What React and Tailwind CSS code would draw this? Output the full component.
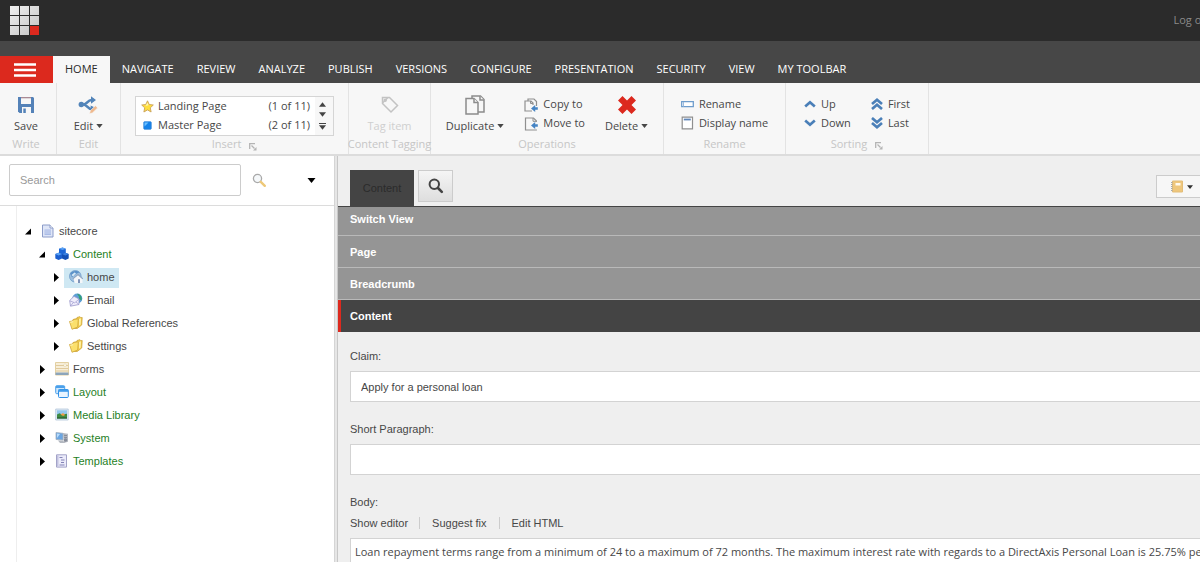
import React, { useState } from 'react';

/* ---------- icons ---------- */

const Caret = ({ className = '' }) => (
    <svg viewBox="0 0 8 5" className={`shrink-0 ${className}`} fill="currentColor" aria-hidden="true">
        <path d="M0 0h8L4 5z" />
    </svg>
);

const Logo = () => (
    <svg width="30" height="30" viewBox="0 0 30 30" aria-label="Sitecore">
        <defs>
            <linearGradient id="cell" x1="0" y1="0" x2="1" y2="1">
                <stop offset="0" stopColor="#f2f2f2" />
                <stop offset="1" stopColor="#c2c2c2" />
            </linearGradient>
        </defs>
        <path d="M0 0h9v9H0zM10 0h9v9h-9zM20 0h9v9h-9zM0 10h9v9H0zM10 10h9v9h-9zM20 10h9v9h-9zM0 20h9v9H0zM10 20h9v9h-9z" fill="url(#cell)" />
        <path d="M20 20h9v9h-9z" fill="#dc291e" />
    </svg>
);

const SaveIcon = () => (
    <svg width="18" height="18" viewBox="0 0 18 18" aria-hidden="true">
        <path d="M1 1h15l1 1v15H2.500L1 15.500z" fill="#5482b8" />
        <path d="M4 1h10v7H4zM5 11h9v6H5z" fill="#f7f7f7" />
        <path d="M4 1h10v1.300H4z" fill="#a98a94" />
        <path d="M6.300 12.500h2.500V17H6.300z" fill="#5482b8" />
    </svg>
);

const EditIcon = () => (
    <svg width="20" height="18" viewBox="0 0 20 18" fill="none" aria-hidden="true">
        <path d="M3 8.500h2.500c3.500 0 4-4.500 8-4.500h2M5.500 8.500c3.500 0 4 4.500 8 4.500h1" stroke="#5284b9" strokeWidth="2.600" />
        <path d="M13 .2L18 4l-5 3.800zM12.500 9.500l4.500 2-3.500 4z" fill="#5284b9" />
        <circle cx="3.300" cy="8.500" r="2.700" fill="#5284b9" />
        <path d="M11.500 17.800l.9-3.200 5.100-4.900 2.100 2.200-5 4.900z" fill="#efb98e" stroke="#f7f7f7" strokeWidth=".6" />
    </svg>
);

const StarIcon = () => (
    <svg width="13" height="13" viewBox="0 0 13 13" aria-hidden="true">
        <path d="M6.500 .8l1.700 3.700 4.100.5-3 2.800.8 4.200-3.600-2.100-3.600 2.100.8-4.200-3-2.800 4.100-.5z" fill="#ffdf3d" stroke="#caa05a" strokeWidth=".9" />
        <path d="M6.500 2.500l1 2.800-3 .6z" fill="#fff6b5" />
    </svg>
);

const SquareIcon = () => (
    <svg width="13" height="13" viewBox="0 0 13 13" aria-hidden="true">
        <rect x="2.800" y="2.800" width="7.400" height="7.400" rx=".6" fill="#1583ea" stroke="#2a7fd6" strokeWidth=".8" />
        <path d="M3.500 3.500h4l-4 4z" fill="#6cc0ff" />
    </svg>
);

const LauncherIcon = () => (
    <svg width="8" height="8" viewBox="0 0 8 8" fill="none" stroke="#b4b4b4" aria-hidden="true">
        <path d="M.7 6V.7H6M2.500 2.500l3 3" strokeWidth="1.300" />
        <path d="M7.500 4v3.500H4z" fill="#b4b4b4" stroke="none" />
    </svg>
);

const TagIcon = () => (
    <svg width="18" height="18" viewBox="0 0 18 18" fill="none" stroke="#c3c3c3" strokeWidth="1.500" aria-hidden="true">
        <path d="M1.500 1.500v6l8.500 8.500 6.500-6.500-8-8z" />
        <path d="M1.500 7L7 1.500" />
        <circle cx="4.200" cy="4.200" r="1" />
    </svg>
);

const DuplicateIcon = () => (
    <svg width="20" height="20" viewBox="0 0 20 20" fill="#f7f7f7" stroke="#8c8c8c" strokeWidth="1.500" aria-hidden="true">
        <path d="M7 1h8.500L19 4.500V17H7z" />
        <path d="M15 1v4h4" />
        <path d="M1 3.500h8L13 7.500V19H1z" />
        <path d="M9 3.500v4h4" />
    </svg>
);

const CopyIcon = () => (
    <svg width="14" height="14" viewBox="0 0 14 14" fill="none" stroke="#8f8f8f" aria-hidden="true">
        <path d="M4 3V1h6l2.500 2.500V8M1 3h6l2 2v2M1 2.500V13h7" strokeWidth="1.200" />
        <path d="M6.500 3v2.500H9" />
        <path d="M13.800 9.300h-2.600V7L7 10.500l4.200 3.400v-2.200h2.600z" fill="#4584c4" stroke="none" />
    </svg>
);

const MoveIcon = () => (
    <svg width="14" height="14" viewBox="0 0 14 14" fill="none" stroke="#8f8f8f" aria-hidden="true">
        <path d="M12.300 12.500v.5H1.500V1h8l2.800 2.800V5" strokeWidth="1.200" />
        <path d="M9 1v3.300h3.300" />
        <path d="M13.800 7.300h-2.600V5L7 8.500l4.200 3.400V9.700h2.600z" fill="#4584c4" stroke="none" />
    </svg>
);

const DeleteIcon = () => (
    <svg width="18" height="18" viewBox="0 0 18 18" aria-hidden="true">
        <path d="M4.500 0L9 4.500 13.500 0 18 4.500 13.500 9l4.500 4.500-4.500 4.500L9 13.500 4.500 18 0 13.500 4.500 9 0 4.500z" fill="#dc291e" />
    </svg>
);

const RenameIcon = () => (
    <svg width="13" height="12" viewBox="0 0 13 12" fill="none" aria-hidden="true">
        <path d="M.7 3.700h11.600v5H.7z" fill="#fff" stroke="#6f9dcc" strokeWidth="1.300" />
        <path d="M2.500 4v4.500" stroke="#9bbbe0" />
    </svg>
);

const DisplayNameIcon = () => (
    <svg width="13" height="14" viewBox="0 0 13 14" fill="none" aria-hidden="true">
        <path d="M1.200 1.200h10.300v11.600H1.200z" fill="#fff" stroke="#8f8f8f" strokeWidth="1.200" />
        <path d="M2.800 3.500h7" stroke="#5f86b8" strokeWidth="1.800" />
    </svg>
);

const Chevrons = ({ double, down }) => (
    <svg width="12" height="12" viewBox="0 0 12 12" fill="none" stroke="#4a7fb8" strokeWidth="2.700" className={down ? 'rotate-180' : ''} aria-hidden="true">
        {double ? <path d="M1 6L6 1.800 11 6M1 11L6 6.800l5 4.200" /> : <path d="M1.200 8.500L6 4.300l4.800 4.200" />}
    </svg>
);

const SearchGlass = () => (
    <svg width="15" height="15" viewBox="0 0 15 15" fill="none" aria-hidden="true">
        <circle cx="5.500" cy="5.500" r="4.100" fill="#f5f8fa" stroke="#a9a9a9" strokeWidth="1.300" />
        <path d="M8.800 8.800l4 4" stroke="#edc878" strokeWidth="2.400" strokeLinecap="round" />
    </svg>
);

const BoldSearch = () => (
    <svg width="16" height="16" viewBox="0 0 16 16" fill="none" stroke="#444" aria-hidden="true">
        <circle cx="6.300" cy="6.300" r="4.700" strokeWidth="2" />
        <path d="M10 10l3.800 3.800" strokeWidth="2.600" strokeLinecap="round" />
    </svg>
);

const NotebookIcon = () => (
    <svg width="12" height="13" viewBox="0 0 12 13" aria-hidden="true">
        <path d="M1.500 1h10v11h-10z" fill="#efc77c" stroke="#e3bd78" />
        <path d="M4.500 3h5v2.500h-5z" fill="#fffaf0" />
        <path d="M.8 2v9.500" stroke="#a8a8a8" strokeWidth="1.500" strokeDasharray="1 1" />
    </svg>
);

const DocumentIcon = () => (
    <svg width="14" height="14" viewBox="0 0 14 14" aria-hidden="true">
        <path d="M1.500 1h7.500l3 3v9H1.500z" fill="#dfe6f7" stroke="#8c9cc9" />
        <path d="M9 1v3h3" fill="#fff" stroke="#8c9cc9" />
        <path d="M3.500 5.500h6.500v5.500H3.500z" fill="#a9bbe6" />
        <path d="M3.500 7h6.500M3.500 9h6.500" stroke="#dfe6f7" strokeWidth=".7" />
    </svg>
);

const CubesIcon = () => (
    <svg width="14" height="14" viewBox="0 0 14 14" aria-hidden="true">
        <path d="M4 1.700L7.500 .5l3.300 1.200v4.600L7.500 8 4 6.300z" fill="#1d66d6" />
        <path d="M.3 7l3.200-1.300L7 7v4.500L3.600 13 .3 11.500z" fill="#1b5fd0" />
        <path d="M7 7l3.300-1.300L13.700 7v4.500L10.400 13 7 11.500z" fill="#1450b5" />
        <path d="M4 1.700L7.500 .5l3.300 1.200-3.300 1.400zM.3 7l3.200-1.300L7 7 3.600 8.400z" fill="#5aa2f4" />
        <path d="M7 7l3.300-1.300L13.700 7l-3.300 1.400z" fill="#3a80e0" />
    </svg>
);

const HomeIcon = () => (
    <svg width="14" height="14" viewBox="0 0 14 14" aria-hidden="true">
        <circle cx="6.300" cy="6.300" r="5.800" fill="#9dbfdf" stroke="#6d9ac9" strokeWidth=".8" />
        <path d="M1.200 3.500C3.500.5 8 .5 10.500 2.200L6.500 4.200 3 7.500z" fill="#5b91c8" />
        <path d="M2.500 5l3-2.500 1.500.7L4 6.500z" fill="#dcebf6" />
        <path d="M4.500 8.300L9 4.500l4.500 3.800V13h-8z" fill="#f4f6f9" />
        <path d="M3.800 8.900L9 4.600l4.800 4.300" stroke="#8fa6c2" strokeWidth="1.200" fill="none" />
        <path d="M9 9.300h2V13H9z" fill="#7f93b8" />
    </svg>
);

const EmailIcon = () => (
    <svg width="14" height="14" viewBox="0 0 14 14" aria-hidden="true">
        <circle cx="8.300" cy="5.500" r="5" fill="#5e9fd6" />
        <path d="M8 .8c4 .5 5.500 4 4.600 6.500-2-.3-3.300-2-2.600-3.500z" fill="#35a077" />
        <path d="M.7 7.500L5 3.300l5 2.700v5.500l-8.500 1.700z" fill="#efedfb" stroke="#9b97cb" strokeWidth=".8" />
        <path d="M.9 7.800l4.800 2 4.200-3.600M1.500 13l3-3.600M9.800 11.300L7 9" stroke="#9b97cb" strokeWidth=".7" fill="none" />
    </svg>
);

const FolderIcon = () => (
    <svg width="14" height="14" viewBox="0 0 14 14" aria-hidden="true">
        <path d="M4 3.500L7.500 2.800 8 1.500l3-.8.7 1 1.500-.2-.5 7.500-4.500 3.500H4z" fill="#f4cf4b" stroke="#cda53d" strokeWidth=".8" />
        <path d="M10 3l2-.8-.3 6.300-1.700 1.300z" fill="#fff1a6" />
        <path d="M.5 5.500L3.500 5l1-1.500 4.800-.7-.6 8.200-5.700 2.300z" fill="#fbe06c" stroke="#d0a63a" strokeWidth=".8" />
        <path d="M1.200 6.300l3-.6" stroke="#fff6bf" />
    </svg>
);

const FormIcon = () => (
    <svg width="14" height="14" viewBox="0 0 14 14" aria-hidden="true">
        <path d="M.5 .5h13v12.500H.5z" fill="#f7eed8" stroke="#e3d0a2" />
        <path d="M1 3.500h12M1 6.500h12M1 9h12" stroke="#dcc595" strokeWidth=".9" />
        <path d="M9 2h2v2.500H9z" fill="#fff" stroke="#e3d0a2" strokeWidth=".5" />
        <path d="M.5 10.500h13V13H.5z" fill="#8ca5bb" />
    </svg>
);

const LayoutIcon = () => (
    <svg width="14" height="14" viewBox="0 0 14 14" aria-hidden="true">
        <rect x=".7" y=".7" width="9" height="8" rx="1" fill="#cfe6fb" stroke="#4ba0ea" />
        <path d="M1 1h8.500v2H1z" fill="#4ba0ea" />
        <rect x="3.500" y="4.500" width="9.800" height="8" rx="1" fill="#e8f4ff" stroke="#2f90e6" />
        <path d="M3.500 4.500h9.800v2.300H3.500z" fill="#3f9cec" />
    </svg>
);

const MediaIcon = () => (
    <svg width="14" height="14" viewBox="0 0 14 14" aria-hidden="true">
        <path d="M.7 1h12.500v11H.7z" fill="#dfeaf5" stroke="#b3c6da" strokeWidth=".8" />
        <path d="M2 2.300h10v8.200H2z" fill="#93c7ee" />
        <path d="M2 6.500l2.500-1.300L7 6.500l5-.8v4.800H2z" fill="#3f8b42" />
        <path d="M5.500 6.700L8 5l2.200 2-2 1z" fill="#f19a45" />
        <path d="M2 9.300h10v1.200H2z" fill="#2d5f34" />
    </svg>
);

const SystemIcon = () => (
    <svg width="14" height="14" viewBox="0 0 14 14" aria-hidden="true">
        <path d="M8 2l5 .8v8L9 12z" fill="#b7bac2" />
        <path d="M9 4.300l3 .3M9 6.300l3 .2" stroke="#858a95" />
        <path d="M1 1.500l7 .8v6.700L1 8.500z" fill="#6ba6e2" stroke="#a3aebc" strokeWidth=".8" />
        <path d="M2 2.500l3 .4-3 4z" fill="#b9dcfb" />
        <path d="M3 9.500h5l2 2.500H5z" fill="#b3b8c0" />
        <circle cx="10.500" cy="9" r="1.800" fill="#868c99" />
    </svg>
);

const TemplateIcon = () => (
    <svg width="14" height="14" viewBox="0 0 14 14" aria-hidden="true">
        <path d="M1.500 .8h10v12.300h-10z" fill="#ebebfa" stroke="#a3a3c8" />
        <path d="M2 1.300h1.500v11.300H2z" fill="#c3c3e0" />
        <path d="M4.500 3.500h3M6 6h3.500M6 8.500h3M4.500 11h5" stroke="#8383b5" />
    </svg>
);

/* ---------- ribbon ---------- */

const TABS = ['NAVIGATE', 'REVIEW', 'ANALYZE', 'PUBLISH', 'VERSIONS', 'CONFIGURE', 'PRESENTATION', 'SECURITY', 'VIEW', 'MY TOOLBAR'];

const RibbonGroup = ({ label, launcher, className, children }) => (
    <section className={`flex shrink-0 flex-col border-r border-[#e3e3e3] pt-2.5 ${className}`}>
        <div className="flex h-[42px] items-center justify-center gap-5">{children}</div>
        <div className="flex h-5 items-center justify-center gap-2 whitespace-nowrap text-[#c6c6c6]">
            {label}
            {launcher && <button aria-label={`${label} options`} className="pt-1"><LauncherIcon /></button>}
        </div>
    </section>
);

const LargeButton = ({ icon, label, menu, disabled }) => (
    <button disabled={disabled} className="flex flex-col items-center disabled:text-[#cfcfcf]">
        <span className="flex h-6 items-center">{icon}</span>
        <span className="flex h-[18px] items-center gap-[3px] whitespace-nowrap">
            {label}
            {menu && <Caret className="h-1 w-[7px]" />}
        </span>
    </button>
);

const SmallButton = ({ icon, label }) => (
    <button className="flex h-[19px] items-center gap-[5px] whitespace-nowrap">
        {icon}
        {label}
    </button>
);

const Ribbon = () => (
    <div className="flex h-[73px] shrink-0 border-b-2 border-[#dcdcdc] bg-[#f7f7f7]">
        <RibbonGroup label="Write" className="w-[57px] pr-1">
            <LargeButton icon={<SaveIcon />} label="Save" />
        </RibbonGroup>
        <RibbonGroup label="Edit" className="w-16">
            <LargeButton icon={<EditIcon />} label="Edit" menu />
        </RibbonGroup>
        <RibbonGroup label="Insert" launcher className="w-[228px]">
            <div className="mt-1 flex h-10 w-[199px] border border-[#d5d5d5] bg-white">
                <div className="flex flex-1 flex-col">
                    {[
                        [<StarIcon />, 'Landing Page', '(1 of 11)'],
                        [<SquareIcon />, 'Master Page', '(2 of 11)'],
                    ].map(([icon, name, count]) => (
                        <button key={name} className="flex h-[19px] items-center gap-1 pl-[5px] pr-[5px] text-left">
                            {icon}
                            <span className="flex-1">{name}</span>
                            <span>{count}</span>
                        </button>
                    ))}
                </div>
                <div className="flex w-[18px] flex-col items-center justify-around bg-[#f7f7f7] py-0.5 pr-1 text-[#444]">
                    <button aria-label="Scroll up"><Caret className="h-[5px] w-[7px] rotate-180" /></button>
                    <button aria-label="Scroll down"><Caret className="h-[5px] w-[7px]" /></button>
                    <button aria-label="Show all" className="border-t border-[#444] pt-px"><Caret className="h-[5px] w-[7px]" /></button>
                </div>
            </div>
        </RibbonGroup>
        <RibbonGroup label="Content Tagging" className="w-[82px]">
            <LargeButton icon={<TagIcon />} label="Tag item" disabled />
        </RibbonGroup>
        <RibbonGroup label="Operations" className="w-[233px]">
            <LargeButton icon={<DuplicateIcon />} label="Duplicate" menu />
            <div>
                <SmallButton icon={<CopyIcon />} label="Copy to" />
                <SmallButton icon={<MoveIcon />} label="Move to" />
            </div>
            <LargeButton icon={<DeleteIcon />} label="Delete" menu />
        </RibbonGroup>
        <RibbonGroup label="Rename" className="w-[122px]">
            <div>
                <SmallButton icon={<RenameIcon />} label="Rename" />
                <SmallButton icon={<DisplayNameIcon />} label="Display name" />
            </div>
        </RibbonGroup>
        <RibbonGroup label="Sorting" launcher className="w-[143px]">
            <div>
                <SmallButton icon={<Chevrons />} label="Up" />
                <SmallButton icon={<Chevrons down />} label="Down" />
            </div>
            <div>
                <SmallButton icon={<Chevrons double />} label="First" />
                <SmallButton icon={<Chevrons double down />} label="Last" />
            </div>
        </RibbonGroup>
    </div>
);

/* ---------- content tree ---------- */

const TREE = {
    name: 'sitecore',
    icon: <DocumentIcon />,
    children: [
        {
            name: 'Content',
            icon: <CubesIcon />,
            green: true,
            children: [
                { name: 'home', icon: <HomeIcon /> },
                { name: 'Email', icon: <EmailIcon /> },
                { name: 'Global References', icon: <FolderIcon /> },
                { name: 'Settings', icon: <FolderIcon /> },
            ],
        },
        { name: 'Forms', icon: <FormIcon /> },
        { name: 'Layout', icon: <LayoutIcon />, green: true },
        { name: 'Media Library', icon: <MediaIcon />, green: true },
        { name: 'System', icon: <SystemIcon />, green: true },
        { name: 'Templates', icon: <TemplateIcon />, green: true },
    ],
};

const TreeNode = ({ node, selected, onSelect }) => {
    const [open, setOpen] = useState(Boolean(node.children));

    return (
        <li>
            <div className="flex h-[23px] items-center">
                <button className="flex w-[11px]" aria-label={`Toggle ${node.name}`} onClick={() => setOpen(!open)}>
                    <svg width="7" height="9" viewBox="0 0 7 9" aria-hidden="true">
                        <path d={open ? 'M6 1.500v6H0z' : 'M1 0l5 4.500L1 9z'} />
                    </svg>
                </button>
                <button
                    onClick={() => onSelect(node.name)}
                    className={`flex h-5 items-center gap-1 pl-[5px] pr-1 ${selected === node.name ? 'bg-[#cfe8f3]' : ''} ${node.green ? 'text-[#1f7f26]' : 'text-[#474747]'}`}
                >
                    <span className="pb-0.5">{node.icon}</span>
                    {node.name}
                </button>
            </div>
            {open && node.children && (
                <ul className="pl-3.5">
                    {node.children.map((child) => (
                        <TreeNode key={child.name} node={child} selected={selected} onSelect={onSelect} />
                    ))}
                </ul>
            )}
        </li>
    );
};

const Sidebar = () => {
    const [selected, setSelected] = useState('home');

    return (
        <aside className="flex w-[334px] shrink-0 flex-col bg-white">
            <div className="flex items-center border-b border-[#dcdcdc] pb-[9px] pl-[9px] pt-2">
                <input
                    type="search"
                    aria-label="Search"
                    placeholder="Search"
                    className="h-8 w-[232px] rounded-xs border border-[#ccc] px-2.5 placeholder:text-[#999]"
                />
                <button aria-label="Run search" className="ml-[11px]"><SearchGlass /></button>
                <button aria-label="Search options" className="ml-10 text-black"><Caret className="h-[5px] w-[9px]" /></button>
            </div>
            <ul className="ml-4 flex-1 border-l border-[#eee] pl-2 pt-3.5">
                <TreeNode node={TREE} selected={selected} onSelect={setSelected} />
            </ul>
        </aside>
    );
};

/* ---------- editor ---------- */

const Editor = () => (
    <main className="min-w-0 flex-1 overflow-hidden border-l border-[#c8c8c8] bg-[#efefef]">
        <div className="flex h-[51px] items-end border-b border-[#444] pl-3">
            <button className="h-9 w-16 bg-[#444] text-[#2b2b2b]">Content</button>
            <button aria-label="Search" className="mb-1 ml-1 flex h-8 w-[35px] items-center justify-center border border-[#ccc] bg-linear-to-b from-[#f5f5f5] to-[#dedede]">
                <BoldSearch />
            </button>
            <button aria-label="Notes" className="mb-2 ml-auto flex h-[23px] w-11 items-center gap-1 border border-r-0 border-[#ccc] bg-[#f7f7f7] pl-3.5 text-[#333]">
                <NotebookIcon />
                <Caret className="h-1 w-1.5" />
            </button>
        </div>

        {['Switch View', 'Page', 'Breadcrumb'].map((title) => (
            <button key={title} className="flex h-8 w-full items-center border-b border-[#b9b9b9] bg-[#959595] pl-3 pt-px font-bold text-white first-of-type:h-[29px] first-of-type:pb-1">
                {title}
            </button>
        ))}
        <button className="flex h-8 w-full items-center border-l-3 border-[#dc291e] bg-[#444] pl-[9px] font-bold text-white">
            Content
        </button>

        <form className="flex flex-col pl-3 pt-4">
            <label htmlFor="claim" className="h-[23px] leading-4">Claim:</label>
            <input id="claim" defaultValue="Apply for a personal loan" className="mb-[19px] h-[31px] border border-r-0 border-[#d3d3d3] bg-white px-2.5" />

            <label htmlFor="short" className="h-[23px] leading-4">Short Paragraph:</label>
            <input id="short" className="mb-[19px] h-[31px] border border-r-0 border-[#d3d3d3] bg-white px-2.5" />

            <label htmlFor="body" className="h-[21px] leading-4">Body:</label>
            <div className="mb-[7px] flex h-4 items-center">
                <a href="#editor" className="pr-[11px]">Show editor</a>
                <a href="#suggest" className="border-l border-[#ccc] px-3 leading-3">Suggest fix</a>
                <a href="#html" className="border-l border-[#ccc] pl-3 leading-3">Edit HTML</a>
            </div>
            <textarea
                id="body"
                wrap="off"
                rows={6}
                className="resize-none overflow-hidden border border-r-0 border-[#d3d3d3] bg-white px-1 pt-1 font-['Open_Sans',sans-serif] text-[11px] leading-[18px]"
                defaultValue="Loan repayment terms range from a minimum of 24 to a maximum of 72 months. The maximum interest rate with regards to a DirectAxis Personal Loan is 25.75% per annum."
            />
        </form>
    </main>
);

const App = () => (
    <div className="flex h-screen flex-col overflow-hidden bg-white font-['Open_Sans',sans-serif] text-[11px] text-[#474747]">
        <header className="flex h-[41px] shrink-0 items-center justify-between bg-[#2b2b2b] pl-2.5">
            <Logo />
            <button className="-mr-3 whitespace-nowrap text-[#8a8a8a]">Log out</button>
        </header>

        <nav className="flex h-[42px] shrink-0 items-end bg-[#474747]">
            <button aria-label="Menu" className="flex h-[27px] w-[53px] items-center justify-center bg-[#dc291e] pr-1">
                <svg width="22" height="14" viewBox="0 0 22 14" stroke="#fff" strokeWidth="2.500" aria-hidden="true">
                    <path d="M0 1.500h22M0 7h22M0 12.500h22" />
                </svg>
            </button>
            <button className="h-[27px] bg-[#f7f7f7] px-3 text-[#2b2b2b]">HOME</button>
            {TABS.map((tab) => (
                <button key={tab} className="h-[27px] whitespace-nowrap pl-3 pr-[11px] text-white">
                    {tab}
                </button>
            ))}
        </nav>

        <Ribbon />

        <div className="flex min-h-0 flex-1 font-['Liberation_Sans',Arial,sans-serif]">
            <Sidebar />
            <div className="w-[3px] shrink-0 border-l border-[#d5d5d5] bg-[#e6e6e6]" />
            <Editor />
        </div>
    </div>
);

export default App;
